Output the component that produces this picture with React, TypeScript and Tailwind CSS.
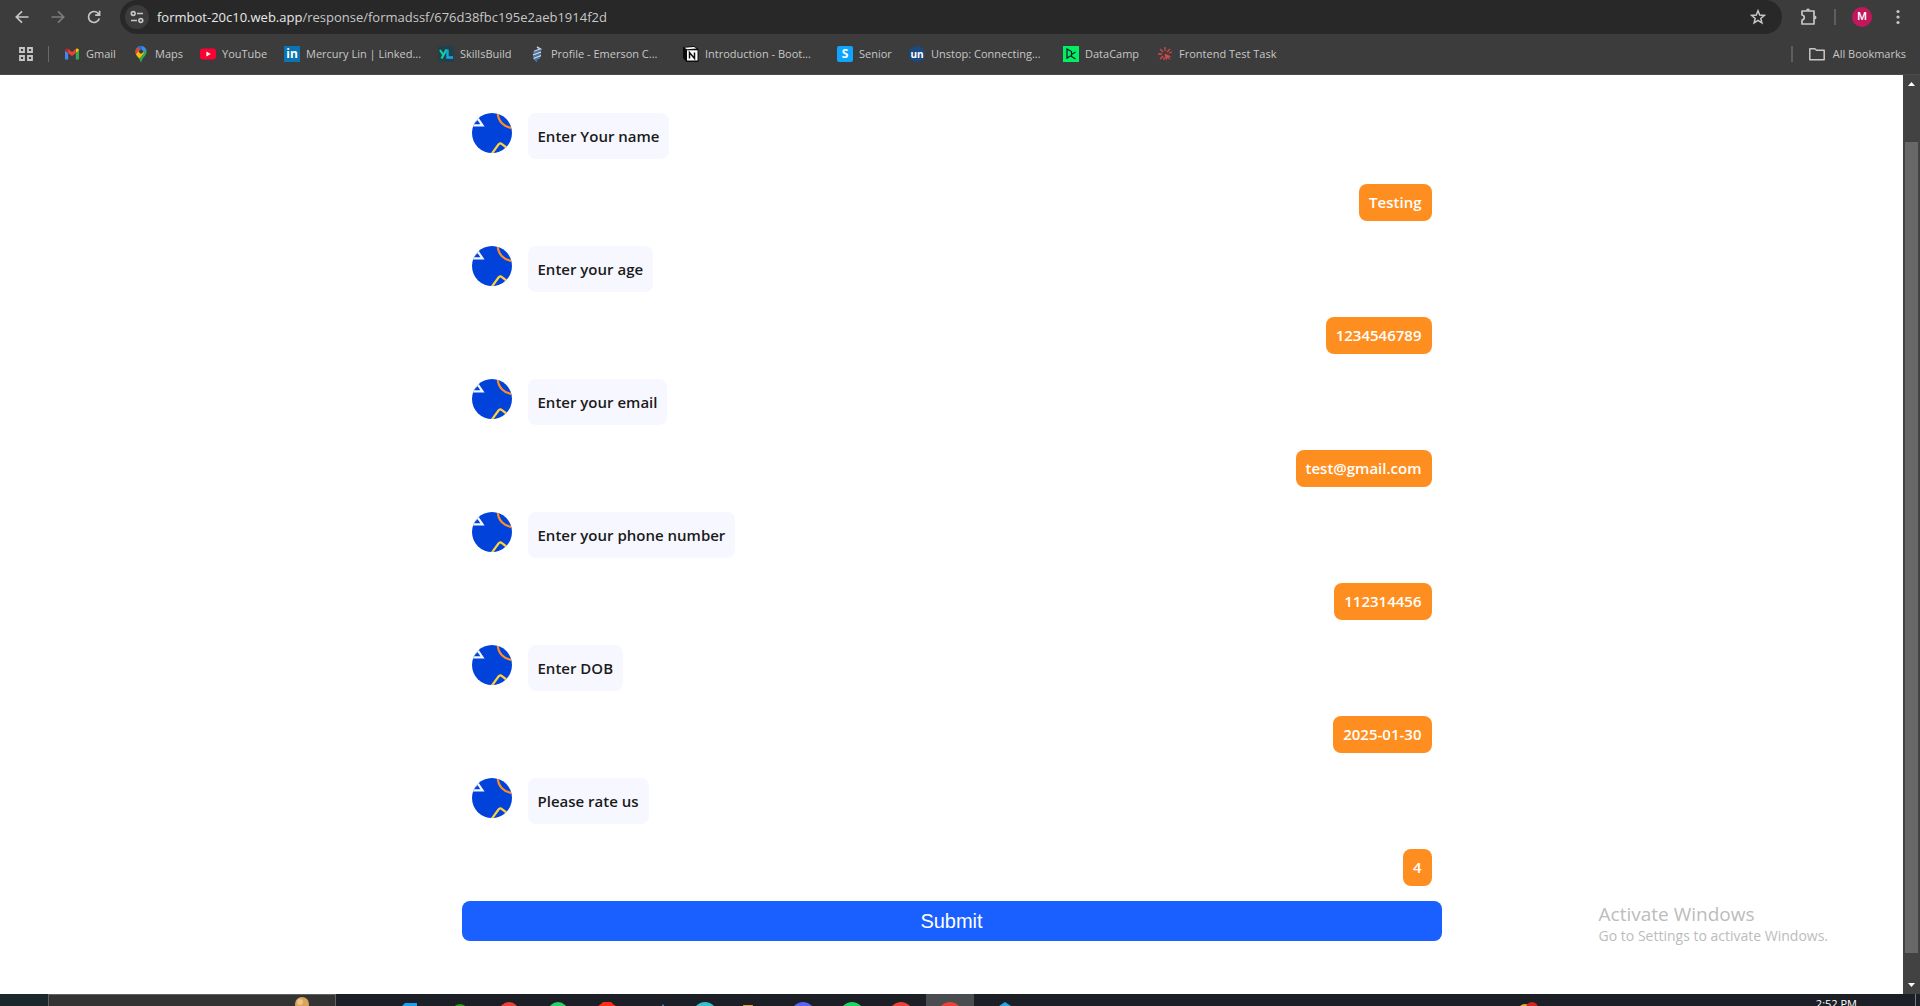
import type { ReactNode } from 'react'

const UI = "font-['Open_Sans','Noto_Sans',sans-serif]"

type Turn = { question: string; answer: string }

const turns: Turn[] = [
  { question: 'Enter Your name', answer: 'Testing' },
  { question: 'Enter your age', answer: '1234546789' },
  { question: 'Enter your email', answer: 'test@gmail.com' },
  { question: 'Enter your phone number', answer: '112314456' },
  { question: 'Enter DOB', answer: '2025-01-30' },
  { question: 'Please rate us', answer: '4' },
]

function GmailIcon() {
  return (
    <svg viewBox="0 0 16 16" className="size-4 shrink-0">
      <path d="M1 13.5V4.5l3.2 2.4v6.6z" fill="#4285f4" />
      <path d="M11.8 13.5V6.9L15 4.5v9z" fill="#34a853" />
      <path d="M1 4.6C1 2.6 3 2 4.2 3v4L1 4.6z" fill="#c5221f" />
      <path d="M11.8 3C13 2 15 2.6 15 4.6L11.8 7z" fill="#fbbc04" />
      <path d="M4.2 3 8 5.9 11.8 3v4L8 9.9 4.2 7z" fill="#ea4335" />
    </svg>
  )
}

function MapsIcon() {
  return (
    <svg viewBox="0 0 16 16" className="size-4 shrink-0">
      <clipPath id="pin">
        <path d="M8 0a5.6 5.6 0 0 1 5.6 5.6C13.6 10 9.5 11 8.6 15.4Q8 16.6 7.4 15.4C6.5 11 2.4 10 2.4 5.6A5.6 5.6 0 0 1 8 0z" />
      </clipPath>
      <g clipPath="url(#pin)">
        <path d="M0 0h16v16H0z" fill="#34a853" />
        <path d="M5 0h8l3 3-7 3z" fill="#4285f4" />
        <path d="M4 0h5v4L5 7z" fill="#1a73e8" />
        <path d="M0 0h4l3 4-4 5H0z" fill="#ea4335" />
        <path d="M2 9.500 7 3.500l4 3.500-6 7z" fill="#fbbc04" />
      </g>
      <circle cx="8" cy="5.600" r="2.100" fill="#3c3c3c" />
    </svg>
  )
}

function YoutubeIcon() {
  return (
    <svg viewBox="0 0 16 16" className="size-4 shrink-0">
      <rect y="2.500" width="16" height="11" rx="3" fill="#ff0033" />
      <path d="M6.400 5.500v5L10.800 8z" fill="#fff" />
    </svg>
  )
}

function SkillsIcon() {
  return (
    <svg viewBox="0 0 16 16" className="size-4 shrink-0">
      <rect width="16" height="16" fill="#233f48" />
      <path d="M2 4l3 4.500M8.500 3.500 3.500 12.500" stroke="#10d0a0" strokeWidth="2.200" />
      <path d="M9.500 3.500v8H15" stroke="#10a8e8" strokeWidth="2.400" fill="none" />
    </svg>
  )
}

function EmersonIcon() {
  return (
    <svg viewBox="0 0 16 16" className="size-4 shrink-0">
      <path d="M8 1 11.500 3 5 5.500M12 6 4 9M12 9.500 4.500 12.500" stroke="#c4d0e0" strokeWidth="1.500" fill="none" />
      <path d="M12 4 4 7M12 7.700 4 10.700M11 12 6 13.500 8 15.500" stroke="#4a7ab8" strokeWidth="1.500" fill="none" />
    </svg>
  )
}

function NotionIcon() {
  return (
    <svg viewBox="0 0 16 16" className="size-4 shrink-0">
      <path d="M0 1 11 0l4.500 3v13H3.500L0 12z" fill="#0c0c0c" />
      <path d="M1.500 1.800 11 1l2.500 1.500-9.500.7z" fill="#fff" />
      <path d="M4 4.300h10.500v10.200H4z" fill="#fff" />
      <path d="M6.500 12.500V6.500l5 6v-6" stroke="#0c0c0c" strokeWidth="1.500" fill="none" />
    </svg>
  )
}

function DataCampIcon() {
  return (
    <svg viewBox="0 0 16 16" className="size-4 shrink-0">
      <path d="M0 0h16v16H0z" fill="#03ef62" />
      <path d="M4 13V3l4.500 2.500v4L4 12M12.500 6 8.500 8.500v2l4 2.500" stroke="#05192d" strokeWidth="1.200" fill="none" />
    </svg>
  )
}

function ClickIcon() {
  return (
    <svg viewBox="0 0 16 16" className="size-4 shrink-0">
      <path d="M8 1v4M3 3l3 3M13 3l-3 3M1 8h4M3 13l3-3M12 7l3-1M7 11v3" stroke="#d84848" strokeWidth="1.300" />
      <path d="m7.500 7.500 1.500 7 1.500-2.500 3 2-1.500-3 2.500-.5z" fill="#d84848" />
    </svg>
  )
}

function Badge({ className, children }: { className: string; children: ReactNode }) {
  return (
    <span className={`flex size-4 shrink-0 items-center justify-center text-white font-bold leading-4 ${className}`}>
      {children}
    </span>
  )
}

const bookmarks: { label: string; icon: ReactNode; width: string }[] = [
  { label: 'Gmail', icon: <GmailIcon />, width: 'w-[69px]' },
  { label: 'Maps', icon: <MapsIcon />, width: 'w-[67px]' },
  { label: 'YouTube', icon: <YoutubeIcon />, width: 'w-[84px]' },
  { label: 'Mercury Lin | Linked...', icon: <Badge className="bg-[#0a75b5] text-xs">in</Badge>, width: 'w-[154px]' },
  { label: 'SkillsBuild', icon: <SkillsIcon />, width: 'w-[91px]' },
  { label: 'Profile - Emerson C...', icon: <EmersonIcon />, width: 'w-[154px]' },
  { label: 'Introduction - Boot...', icon: <NotionIcon />, width: 'w-[154px]' },
  { label: 'Senior', icon: <Badge className="bg-[#0da5ff] rounded-xs text-xs">S</Badge>, width: 'w-[72px]' },
  { label: 'Unstop: Connecting...', icon: <Badge className="bg-[#1c4980] rounded-full text-[10px]">un</Badge>, width: 'w-[154px]' },
  { label: 'DataCamp', icon: <DataCampIcon />, width: 'w-[94px]' },
  { label: 'Frontend Test Task', icon: <ClickIcon />, width: 'w-[130px]' },
]

function Toolbar() {
  return (
    <div className="flex h-[34px] items-center text-[#c7c7c7]">
      <button aria-label="Back" className="ml-3 flex size-5 items-center justify-center">
        <svg viewBox="0 0 16 16" className="size-4" fill="none" stroke="currentColor" strokeWidth="1.700">
          <path d="M14.500 8H2.500M8 2.300 2.300 8 8 13.700" />
        </svg>
      </button>
      <button aria-label="Forward" className="ml-4 flex size-5 items-center justify-center text-[#7b7b7b]">
        <svg viewBox="0 0 16 16" className="size-4" fill="none" stroke="currentColor" strokeWidth="1.700">
          <path d="M1.500 8h12M8 2.300 13.700 8 8 13.700" />
        </svg>
      </button>
      <button aria-label="Reload" className="ml-4 flex size-5 items-center justify-center">
        <svg viewBox="0 0 16 16" className="size-4" fill="none" stroke="currentColor" strokeWidth="1.700">
          <path d="M13.300 9.500A5.500 5.500 0 1 1 12.500 4.800L13.500 6M13.600 1.700v4.500H9.200" />
        </svg>
      </button>
      <div className="ml-4 flex h-[34px] flex-1 items-center rounded-full bg-[#282828] pr-4 pl-[5px]">
        <button aria-label="Site information" className="flex size-6 shrink-0 items-center justify-center rounded-full bg-[#3c3c3c]">
          <svg viewBox="0 0 16 16" className="size-4" fill="none" stroke="currentColor" strokeWidth="1.600">
            <circle cx="4.200" cy="4.500" r="1.900" />
            <circle cx="11.800" cy="11.500" r="1.900" />
            <path d="M8 4.500h6M2 11.500h6" />
          </svg>
        </button>
        <p className="ml-2 flex-1 text-[13px] leading-5">
          <span className="text-[#e8e8e8]">formbot-20c10.web.app</span>
          /response/formadssf/676d38fbc195e2aeb1914f2d
        </p>
        <button aria-label="Bookmark this tab">
          <svg viewBox="0 0 16 16" className="size-4" fill="none" stroke="currentColor" strokeWidth="1.500">
            <path d="m8 1.800 1.700 4.300 4.600.3-3.500 3 1.100 4.500L8 11.400l-3.900 2.500 1.100-4.500-3.500-3 4.600-.3z" />
          </svg>
        </button>
      </div>
      <button aria-label="Extensions" className="ml-4">
        <svg viewBox="0 0 20 20" className="size-5" fill="none" stroke="currentColor" strokeWidth="1.700">
          <path d="M4 4h12v13H4v-4c3-.5 3-4.500 0-5z" strokeLinejoin="round" />
          <path d="M8 3.500a2 2 0 0 1 4 0zM16.500 8.500a2 2 0 0 1 0 4z" fill="currentColor" stroke="none" />
        </svg>
      </button>
      <span className="ml-4 h-4 w-0.5 bg-[#5e5e5e]" />
      <button aria-label="Profile" className="ml-4 flex size-5 items-center justify-center rounded-full bg-[#c2185b] font-['Roboto',sans-serif] text-[11px] font-medium text-white">
        M
      </button>
      <button aria-label="Menu" className="mr-3 ml-4 flex size-5 items-center justify-center">
        <svg viewBox="0 0 16 16" className="size-4" fill="currentColor">
          <circle cx="8" cy="2.500" r="1.600" />
          <circle cx="8" cy="8" r="1.600" />
          <circle cx="8" cy="13.500" r="1.600" />
        </svg>
      </button>
    </div>
  )
}

function BookmarksBar() {
  return (
    <nav className="flex h-10 items-center pr-[14px] pl-[19px] text-[11px] leading-4 text-[#c7c7c7]">
      <svg viewBox="0 0 14 14" className="size-[14px] shrink-0" fill="none" stroke="currentColor" strokeWidth="1.800">
        <path d="M1 1h4v4H1zM9 1h4v4H9zM1 9h4v4H1zM9 9h4v4H9z" />
      </svg>
      <span className="mr-[15px] ml-[15px] h-4 w-px bg-[#6a6a6a]" />
      {bookmarks.map((b) => (
        <a key={b.label} href="#" className={`flex shrink-0 items-center gap-1.5 whitespace-nowrap ${b.width}`}>
          {b.icon}
          {b.label}
        </a>
      ))}
      <span className="ml-auto h-4 w-0.5 bg-[#5e5e5e]" />
      <a href="#" className="ml-4 flex items-center gap-2 whitespace-nowrap">
        <svg viewBox="0 0 16 16" className="size-4" fill="none" stroke="currentColor" strokeWidth="1.500">
          <path d="M.8 2.800h5l1.700 1.500h7.700v9.400H.8z" strokeLinejoin="round" />
        </svg>
        All Bookmarks
      </a>
    </nav>
  )
}

function Avatar() {
  return (
    <svg viewBox="0 0 40 40" className="size-10 shrink-0">
      <clipPath id="avatar">
        <circle cx="20" cy="20" r="20" />
      </clipPath>
      <g clipPath="url(#avatar)" fill="none" strokeWidth="2.200">
        <path d="M0 0h40v40H0z" fill="#0042da" />
        <path d="M-1 12.300h11.500L5.800 5.500z" stroke="#f4f6ff" />
        <path d="M25.800 0A15 15 0 0 0 40 14.800" stroke="#ff8e21" />
        <path d="M20 40.500 26.500 31.500q1.700-2 3.500-.3l5 3.800" stroke="#ffd13b" />
      </g>
    </svg>
  )
}

function Chat() {
  return (
    <form className="mx-auto flex w-full max-w-[980px] flex-col pt-[38px]" onSubmit={(e) => e.preventDefault()}>
      <div className="flex flex-col gap-[25px] px-2.5">
        {turns.map((t) => (
          <div key={t.question} className="flex flex-col gap-[25px]">
            <div className="flex items-start gap-4">
              <Avatar />
              <p className="rounded-lg bg-[#f7f8ff] p-2.5 text-[15px] leading-[26px] font-semibold text-[#1b1b1b]">
                {t.question}
              </p>
            </div>
            <p className="self-end rounded-lg bg-[#ff8e21] p-2.5 text-[15px] leading-[17px] font-semibold text-white">
              {t.answer}
            </p>
          </div>
        ))}
      </div>
      <button type="submit" className="mt-[15px] h-10 rounded-lg bg-[#1a5fff] font-['Liberation_Sans',sans-serif] text-xl text-white">
        Submit
      </button>
    </form>
  )
}

function Scrollbar() {
  return (
    <div className="flex w-[17px] shrink-0 flex-col items-center bg-[#424242]">
      <svg viewBox="0 0 17 17" className="size-[17px]" fill="#fff">
        <path d="M5 11h7L8.500 7z" />
      </svg>
      <div className="mt-[50px] mb-6 w-[13px] flex-1 bg-[#686868]" />
      <svg viewBox="0 0 17 17" className="size-[17px]" fill="#fff">
        <path d="M5 6h7l-3.500 4z" />
      </svg>
    </div>
  )
}

function Taskbar() {
  return (
    <footer className="flex h-3 overflow-hidden bg-[#1c1f26]">
      <div className="w-12 shrink-0 bg-[#1a282c]" />
      <div className="w-72 shrink-0 border border-b-0 border-[#626262] bg-[#333]">
        <svg viewBox="0 0 288 12" className="h-3 w-72">
          <circle cx="253" cy="9" r="7" fill="#d9a35a" />
          <circle cx="251" cy="7" r="3" fill="#e8c48c" />
        </svg>
      </div>
      <svg viewBox="0 0 800 12" className="h-3 w-[800px] shrink-0">
        <path d="M590 0h48v12h-48z" fill="#4a4d50" />
        <path d="M66 12l3-3h12v3z" fill="#1aa0f0" />
        <circle cx="124" cy="18" r="8" fill="#1ba000" />
        <circle cx="173" cy="18" r="10" fill="#ea4335" />
        <circle cx="222" cy="18" r="10" fill="#25d366" />
        <path d="M262 12l3-2 2-2h8l2 2 3 2z" fill="#ff2d12" />
        <path d="M326 12l1-2 1 2z" fill="#4aa8f0" />
        <circle cx="369" cy="20" r="12" fill="#35c1d0" />
        <path d="M407 11h10v1h-10z" fill="#e0a020" />
        <circle cx="467" cy="20" r="12" fill="#5865f2" />
        <circle cx="516" cy="20" r="12" fill="#1ed760" />
        <circle cx="565" cy="20" r="12" fill="#ea4335" />
        <circle cx="614" cy="20" r="12" fill="#ea4335" />
        <path d="M663 12l6-4 6 4z" fill="#22a8e8" />
      </svg>
      <svg viewBox="0 0 24 12" className="ml-auto h-3 w-6 shrink-0">
        <circle cx="9" cy="17" r="7" fill="#e8b030" />
        <circle cx="16" cy="14" r="6" fill="#d0281c" />
      </svg>
      <time className="mr-[58px] ml-[276px] pt-1 text-[11px] leading-3 whitespace-nowrap text-white">2:52 PM</time>
      <span className="mr-1 w-px shrink-0 bg-[#77797c]" />
    </footer>
  )
}

export default function App() {
  return (
    <div className={`flex min-h-screen flex-col bg-white ${UI}`}>
      <header className="border-b border-[#4a4a4a] bg-[#3c3c3c]">
        <Toolbar />
        <BookmarksBar />
      </header>
      <div className="relative flex flex-1">
        <main className="flex-1">
          <Chat />
        </main>
        <Scrollbar />
        <aside className="absolute right-[92px] bottom-12 text-[#bcbcbc]">
          <p className="text-[19px] leading-6">Activate Windows</p>
          <p className="text-sm leading-5">Go to Settings to activate Windows.</p>
        </aside>
      </div>
      <Taskbar />
    </div>
  )
}
